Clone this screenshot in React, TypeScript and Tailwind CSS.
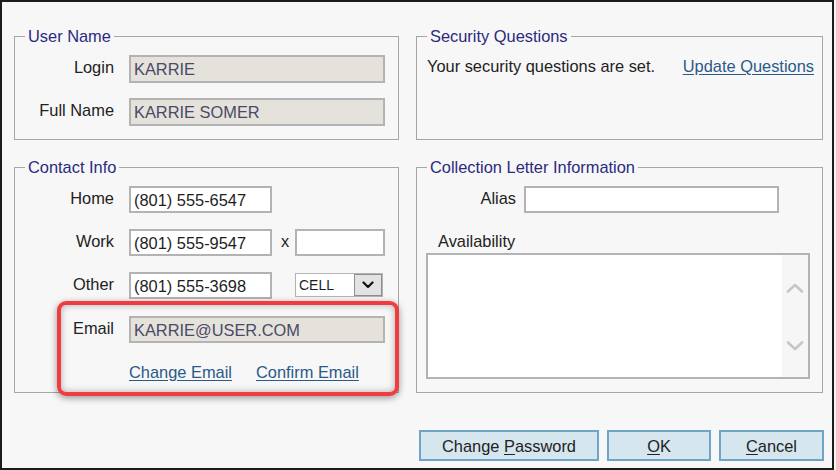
import React from "react";

function Box({ title, className, children }: { title: string; className: string; children: React.ReactNode }) {
  return (
    <fieldset className={"m-0 min-w-0 border border-[#a6a6a6] p-0 " + className}>
      <legend className="ml-[10px] px-[3px] leading-[20px] text-[#2b2a7e]">{title}</legend>
      {children}
    </fieldset>
  );
}

function Label({ text, w }: { text: string; w: string }) {
  return <div className={"mb-[4px] shrink-0 text-right text-[#222] " + w}>{text}</div>;
}

function Chevron({ up }: { up?: boolean }) {
  return (
    <svg width="18" height="10" viewBox="0 0 18 10" className="block">
      <path
        d={up ? "M2 8.5 L9 2 L16 8.5" : "M2 1.5 L9 8 L16 1.5"}
        fill="none"
        stroke="#c6c6c6"
        strokeWidth="2.6"
        strokeLinecap="round"
        strokeLinejoin="round"
      />
    </svg>
  );
}

export default function App() {
  return (
    <div className="h-[470px] w-[836px] bg-[#f4f4f4] font-['Liberation_Sans',Arial,sans-serif] text-[16.4px] leading-[20px]">
      <div className="relative box-border h-[470px] w-[834px] border-2 border-[#1c1c1c] bg-[#f7f7f7] pl-[12px] pt-[24px]">
        <div className="grid w-[809px] grid-cols-[385px_407px] grid-rows-[114px_236px] gap-x-[17px] gap-y-[17px]">
          {/* User Name */}
          <Box title="User Name" className="h-full">
            <div className="flex flex-col gap-[15px] pt-[9px]">
              <div className="flex items-center">
                <Label text="Login" w="w-[99px]" />
                <div className="ml-[15px] box-border flex h-[28px] w-[256px] items-center border-2 border-[#b3b3b3] bg-[#e4e2db] px-[3px] text-[#4a4a66]">
                  KARRIE
                </div>
              </div>
              <div className="flex items-center">
                <Label text="Full Name" w="w-[99px]" />
                <div className="ml-[15px] box-border flex h-[28px] w-[256px] items-center border-2 border-[#b3b3b3] bg-[#e4e2db] px-[3px] text-[#4a4a66]">
                  KARRIE SOMER
                </div>
              </div>
            </div>
          </Box>

          {/* Security Questions */}
          <Box title="Security Questions" className="h-full">
            <div className="flex justify-between pl-[10px] pr-[8px] pt-[10px]">
              <span className="text-[#222]">Your security questions are set.</span>
              <span className="text-[#2a5a88] underline underline-offset-[2px]">Update Questions</span>
            </div>
          </Box>

          {/* Contact Info */}
          <Box title="Contact Info" className="h-full">
            <div className="flex flex-col pt-[9px]">
              <div className="flex items-center">
                <Label text="Home" w="w-[99px]" />
                <div className="ml-[15px] box-border flex h-[27px] w-[143px] items-center border-2 border-[#b3b3b3] bg-white px-[3px] text-[#1e1e1e]">
                  (801) 555-6547
                </div>
              </div>
              <div className="mt-[16px] flex items-center">
                <Label text="Work" w="w-[99px]" />
                <div className="ml-[15px] box-border flex h-[27px] w-[143px] items-center border-2 border-[#b3b3b3] bg-white px-[3px] text-[#1e1e1e]">
                  (801) 555-9547
                </div>
                <span className="mb-[4px] ml-[9px] w-[8px] text-[#222]">x</span>
                <div className="ml-[6px] box-border h-[27px] w-[90px] border-2 border-[#b3b3b3] bg-white" />
              </div>
              <div className="mt-[16px] flex items-center">
                <Label text="Other" w="w-[99px]" />
                <div className="ml-[15px] box-border flex h-[27px] w-[143px] items-center border-2 border-[#b3b3b3] bg-white px-[3px] text-[#1e1e1e]">
                  (801) 555-3698
                </div>
                <div className="mb-[2px] ml-[23px] box-border flex h-[24px] w-[88px] items-stretch border border-[#b3b3b3] bg-white">
                  <span className="flex flex-1 items-center pl-[3px] text-[14px] text-[#1e1e1e]">CELL</span>
                  <span className="box-border flex w-[28px] items-center justify-center border border-[#8e8e8e] bg-[#e3e3e3]">
                    <svg width="12" height="8" viewBox="0 0 12 8">
                      <path d="M1.5 1.5 L6 6 L10.5 1.5" fill="none" stroke="#111" strokeWidth="2.2" strokeLinecap="round" strokeLinejoin="round" />
                    </svg>
                  </span>
                </div>
              </div>
              <div className="mt-[17px] flex items-center">
                <Label text="Email" w="w-[99px]" />
                <div className="ml-[15px] box-border flex h-[27px] w-[256px] items-center border-2 border-[#b3b3b3] bg-[#e4e2db] px-[3px] text-[#4a4a66]">
                  KARRIE@USER.COM
                </div>
              </div>
              <div className="ml-[114px] mt-[19px] flex gap-[24px] text-[#2a5a88]">
                <span className="underline underline-offset-[2px]">Change Email</span>
                <span className="underline underline-offset-[2px]">Confirm Email</span>
              </div>
            </div>
          </Box>

          {/* Collection Letter Information */}
          <Box title="Collection Letter Information" className="h-full">
            <div className="flex flex-col pt-[9px]">
              <div className="flex items-center">
                <Label text="Alias" w="w-[99px]" />
                <div className="ml-[8px] box-border h-[27px] w-[255px] border-2 border-[#b3b3b3] bg-white" />
              </div>
              <div className="ml-[21px] mt-[18px] text-[#222]">Availability</div>
              <div className="ml-[9px] mt-[2px] box-border flex h-[126px] w-[384px] justify-end border-2 border-[#b3b3b3] bg-white">
                <div className="flex w-[26px] flex-col items-center bg-[#f6f6f6]">
                  <div className="mt-[28px]">
                    <Chevron up />
                  </div>
                  <div className="mt-[48px]">
                    <Chevron />
                  </div>
                </div>
              </div>
            </div>
          </Box>
        </div>

        {/* Buttons */}
        <div className="mt-[37px] flex w-[810px] justify-end gap-[8px] text-[#222]">
          <div className="box-border flex h-[31px] w-[180px] items-center justify-center border-2 border-[#6ea5c6] bg-[#d5e6ef]">
            <span>
              Change <span className="underline underline-offset-[2px]">P</span>assword
            </span>
          </div>
          <div className="box-border flex h-[31px] w-[104px] items-center justify-center border-2 border-[#6ea5c6] bg-[#d5e6ef]">
            <span>
              <span className="underline underline-offset-[2px]">O</span>K
            </span>
          </div>
          <div className="box-border flex h-[31px] w-[105px] items-center justify-center border-2 border-[#6ea5c6] bg-[#d5e6ef]">
            <span>
              <span className="underline underline-offset-[2px]">C</span>ancel
            </span>
          </div>
        </div>

        {/* Red highlight annotation */}
        <div className="pointer-events-none absolute left-[55px] top-[299px] box-border h-[95px] w-[342px] rounded-[9px] border-[4px] border-[#f03c3f] shadow-[0_2px_7px_rgba(0,0,0,0.4),inset_0_0_7px_rgba(0,0,0,0.3)]" />
      </div>
    </div>
  );
}
